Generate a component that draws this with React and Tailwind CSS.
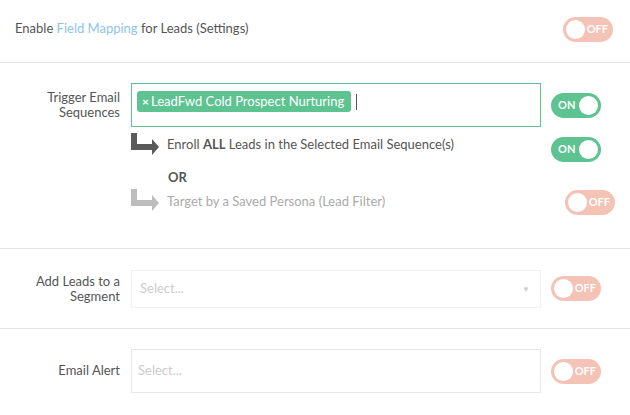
import React from 'react';

const Toggle = ({ on, className = '' }) => {
  if (on) {
    return (
      <div className={`flex h-[25px] w-[50px] shrink-0 items-center justify-between rounded-full bg-[#5dc390] pl-[7px] pr-[3px] ${className}`}>
        <span className="text-[11px] font-bold text-white">ON</span>
        <span className="h-[19px] w-[19px] rounded-full bg-white" />
      </div>
    );
  }
  return (
    <div className={`flex h-[25px] w-[50px] shrink-0 items-center justify-between rounded-full bg-[#f5c2b6] pl-[3px] pr-[5px] ${className}`}>
      <span className="h-[19px] w-[19px] rounded-full bg-white" />
      <span className="text-[11px] font-bold text-white">OFF</span>
    </div>
  );
};

const ElbowArrow = ({ color }) => (
  <svg width="28" height="24" viewBox="0 0 28 24" className="shrink-0">
    <path d="M0 0 H6 V11 H21 V6 L28 14 L21 22 V17 H0 Z" fill={color} />
  </svg>
);

const App = () => {
  return (
    <div className="w-[630px] h-[415px] overflow-hidden bg-white text-[#555] text-[13px]" style={{ fontFamily: 'Lato, "Open Sans", sans-serif' }}>
      {/* field mapping */}
      <div className="flex h-[63px] items-center justify-between border-b border-[#e3e3e3] pb-[4px] pl-[15px] pr-[17px]">
        <div>
          Enable <span className="text-[#8ec5e6]">Field Mapping</span> for Leads (Settings)
        </div>
        <Toggle />
      </div>

      {/* email sequences */}
      <div className="h-[186px] border-b border-[#e3e3e3] pt-[20px]">
        <div className="flex">
          <div className="w-[120px] pt-[7px] text-right leading-[15px]">Trigger Email<br />Sequences</div>
          <div className="ml-[11px] flex h-[44px] w-[410px] items-start border border-[#5dc390] px-[5px] pt-[7px]">
            <div className="flex h-[21px] items-center rounded-[3px] bg-[#5dc390] pl-[5px] pr-[7px] text-[13px] text-white">
              <span className="mr-[2px] text-[12px] font-bold">×</span>LeadFwd Cold Prospect Nurturing
            </div>
            <div className="ml-[5px] mt-[3px] h-[16px] w-px bg-[#555]" />
          </div>
          <Toggle on className="ml-[10px] mt-[10px]" />
        </div>
        <div className="flex h-[29px] items-start pl-[131px] mt-[6px]">
          <ElbowArrow color="#5a5a5a" />
          <div className="ml-[8px] mt-[3px] w-[374px] leading-[16px]">
            Enroll <b>ALL</b> Leads in the Selected Email Sequence(s)
          </div>
          <Toggle on className="ml-[10px] mt-[4px]" />
        </div>
        <div className="pl-[168px] mt-[7px] font-bold leading-[16px]">OR</div>
        <div className="flex items-start pl-[131px] mt-[4px]">
          <ElbowArrow color="#bdbdbd" />
          <div className="ml-[8px] mt-[4px] w-[388px] leading-[16px] text-[#aaa]">Target by a Saved Persona (Lead Filter)</div>
          <Toggle className="ml-[10px] mt-[1px]" />
        </div>
      </div>

      {/* segment */}
      <div className="flex h-[80px] items-center border-b border-[#e3e3e3]">
        <div className="w-[120px] text-right leading-[15px]">Add Leads to a<br />Segment</div>
        <div className="ml-[11px] flex h-[38px] w-[410px] items-center justify-between border border-[#efefef] pl-[8px] pr-[10px] text-[#ccc]">
          <span>Select...</span>
          <span className="text-[8px] text-[#ccc]">▼</span>
        </div>
        <Toggle className="ml-[10px]" />
      </div>

      {/* email alert */}
      <div className="flex h-[84px] items-center">
        <div className="w-[120px] text-right">Email Alert</div>
        <div className="ml-[11px] flex h-[44px] w-[410px] items-center border border-[#e8e8e8] px-[6px] text-[#ccc]">
          <span>Select...</span>
        </div>
        <Toggle className="ml-[10px]" />
      </div>
    </div>
  );
};

export default App;
